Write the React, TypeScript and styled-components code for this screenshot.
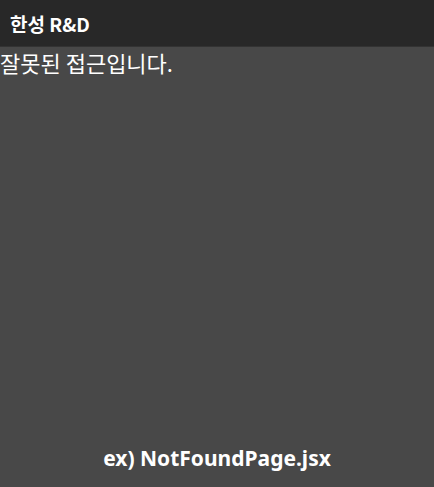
import React from "react";
import styled, { createGlobalStyle } from "styled-components";

const Global = createGlobalStyle`
  html, body { margin: 0; padding: 0; height: 100%; background: #484848; }
  #root { height: 100%; }
  * { box-sizing: border-box; }
`;

const Page = styled.div`
  height: 487px;
  display: flex;
  flex-direction: column;
  background: #484848;
  font-family: "Noto Sans", "Noto Sans CJK KR", sans-serif;
  color: #ffffff;
`;

const Header = styled.header`
  height: 47px;
  flex: none;
  background: #282828;
  border-bottom: 1px solid #333333;
  display: flex;
  align-items: center;
  padding-left: 10px;
`;

const Brand = styled.h1`
  margin: 0;
  font-size: 19px;
  font-weight: 700;
  font-family: "Noto Sans CJK KR", "Noto Sans", sans-serif;
`;

const Main = styled.main`
  flex: 1;
  display: flex;
  flex-direction: column;
  justify-content: space-between;
`;

const Message = styled.p`
  margin: 0;
  font-size: 22px;
  line-height: 30px;
  font-family: "Noto Sans CJK KR", sans-serif;
  font-weight: 400;
`;

const Footer = styled.p`
  margin: 0 0 15px;
  text-align: center;
  font-size: 21px;
  line-height: 28px;
  font-weight: 700;
  font-family: "Noto Sans", "Open Sans", sans-serif;
`;

export default function App() {
  return (
    <>
      <Global />
      <Page>
        <Header>
          <Brand>한성 R&amp;D</Brand>
        </Header>
        <Main>
          <Message>잘못된 접근입니다.</Message>
          <Footer>ex) NotFoundPage.jsx</Footer>
        </Main>
      </Page>
    </>
  );
}
